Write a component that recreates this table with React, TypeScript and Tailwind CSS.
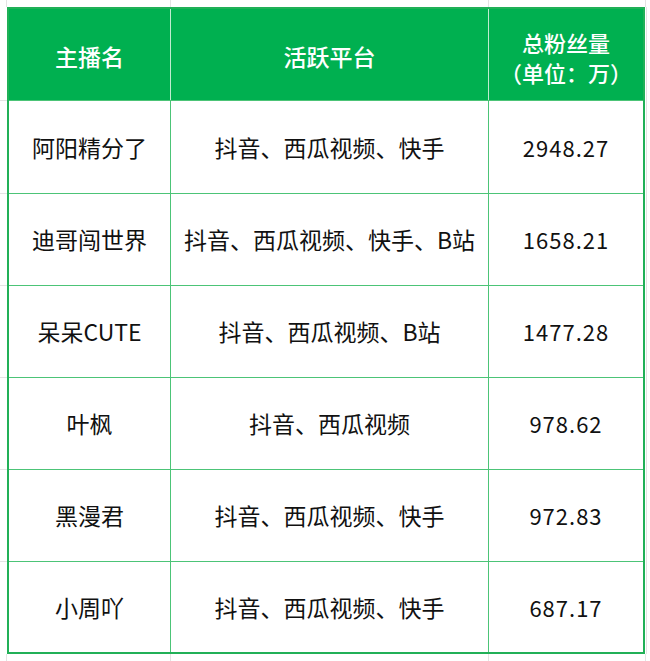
import React from "react";

const rows = [
  { name: "阿阳精分了", platform: "抖音、西瓜视频、快手", fans: "2948.27", h: "h-[92px]" },
  { name: "迪哥闯世界", platform: "抖音、西瓜视频、快手、B站", fans: "1658.21", h: "h-[91px]" },
  { name: "呆呆CUTE", platform: "抖音、西瓜视频、B站", fans: "1477.28", h: "h-[91px]" },
  { name: "叶枫", platform: "抖音、西瓜视频", fans: "978.62", h: "h-[91px]" },
  { name: "黑漫君", platform: "抖音、西瓜视频、快手", fans: "972.83", h: "h-[91px]" },
  { name: "小周吖", platform: "抖音、西瓜视频、快手", fans: "687.17", h: "h-[90px]" },
];

export default function App() {
  return (
    <div
      className="w-[650px] h-[661px] bg-white flex flex-col overflow-hidden"
      style={{ fontFamily: '"Noto Sans CJK SC", "Noto Sans", sans-serif' }}
    >
      {/* top margin strip */}
      <div className="flex h-[7px] shrink-0">
        <div className="w-[6px]" />
        <div className="w-px bg-[#e3e3e3]" />
        <div className="w-[163px]" />
        <div className="w-px bg-[#e3e3e3]" />
        <div className="w-[317px]" />
        <div className="w-px bg-[#e3e3e3]" />
        <div className="w-[156px]" />
        <div className="w-px bg-[#e3e3e3]" />
        <div className="flex-1" />
      </div>
      <div className="flex">
        {/* left margin strip */}
        <div className="w-[7px] flex flex-col">
          <div className="h-[93px]" />
          <div className="h-px bg-[#e3e3e3]" />
          <div className="h-[92px]" />
          <div className="h-px bg-[#e3e3e3]" />
          <div className="h-[91px]" />
          <div className="h-px bg-[#e3e3e3]" />
          <div className="h-[91px]" />
          <div className="h-px bg-[#e3e3e3]" />
          <div className="h-[91px]" />
          <div className="h-px bg-[#e3e3e3]" />
          <div className="h-[91px]" />
          <div className="h-px bg-[#e3e3e3]" />
        </div>
        {/* table */}
        <div className="w-[638px] h-[647px] p-[2px] bg-[#21b057] flex flex-col">
          <div className="flex h-[91px] gap-px bg-[#bfeccf] text-white text-[23px] font-medium">
            <div className="w-[161px] bg-[#00b050] flex items-center justify-center pt-1">主播名</div>
            <div className="w-[317px] bg-[#00b050] flex items-center justify-center pt-1">活跃平台</div>
            <div className="flex-1 bg-[#00b050] flex flex-col items-center justify-center leading-[30px] pt-1 text-[22px]">
              <span>总粉丝量</span>
              <span>（单位：万）</span>
            </div>
          </div>
          <div className="h-px bg-[#4cc477]" />
          <div className="flex flex-col gap-px bg-[#4cc477] flex-1">
            {rows.map((r) => (
              <div key={r.name} className={`flex gap-px ${r.h} text-[23px] text-[#111]`}>
                <div className="w-[161px] bg-white flex items-center justify-center">{r.name}</div>
                <div className="w-[317px] bg-white flex items-center justify-center">{r.platform}</div>
                <div className="flex-1 bg-white flex items-center justify-center text-[22px] tracking-[1px]">
                  {r.fans}
                </div>
              </div>
            ))}
          </div>
        </div>
        <div className="w-px bg-[#e3e3e3] ml-px" />
        <div className="flex-1" />
      </div>
      <div className="flex-1 flex">
        <div className="w-[6px]" />
        <div className="w-px bg-[#e3e3e3]" />
        <div className="w-[163px]" />
        <div className="w-px bg-[#e3e3e3]" />
        <div className="w-[317px]" />
        <div className="w-px bg-[#e3e3e3]" />
        <div className="w-[156px]" />
        <div className="w-px bg-[#e3e3e3]" />
        <div className="flex-1" />
      </div>
    </div>
  );
}
